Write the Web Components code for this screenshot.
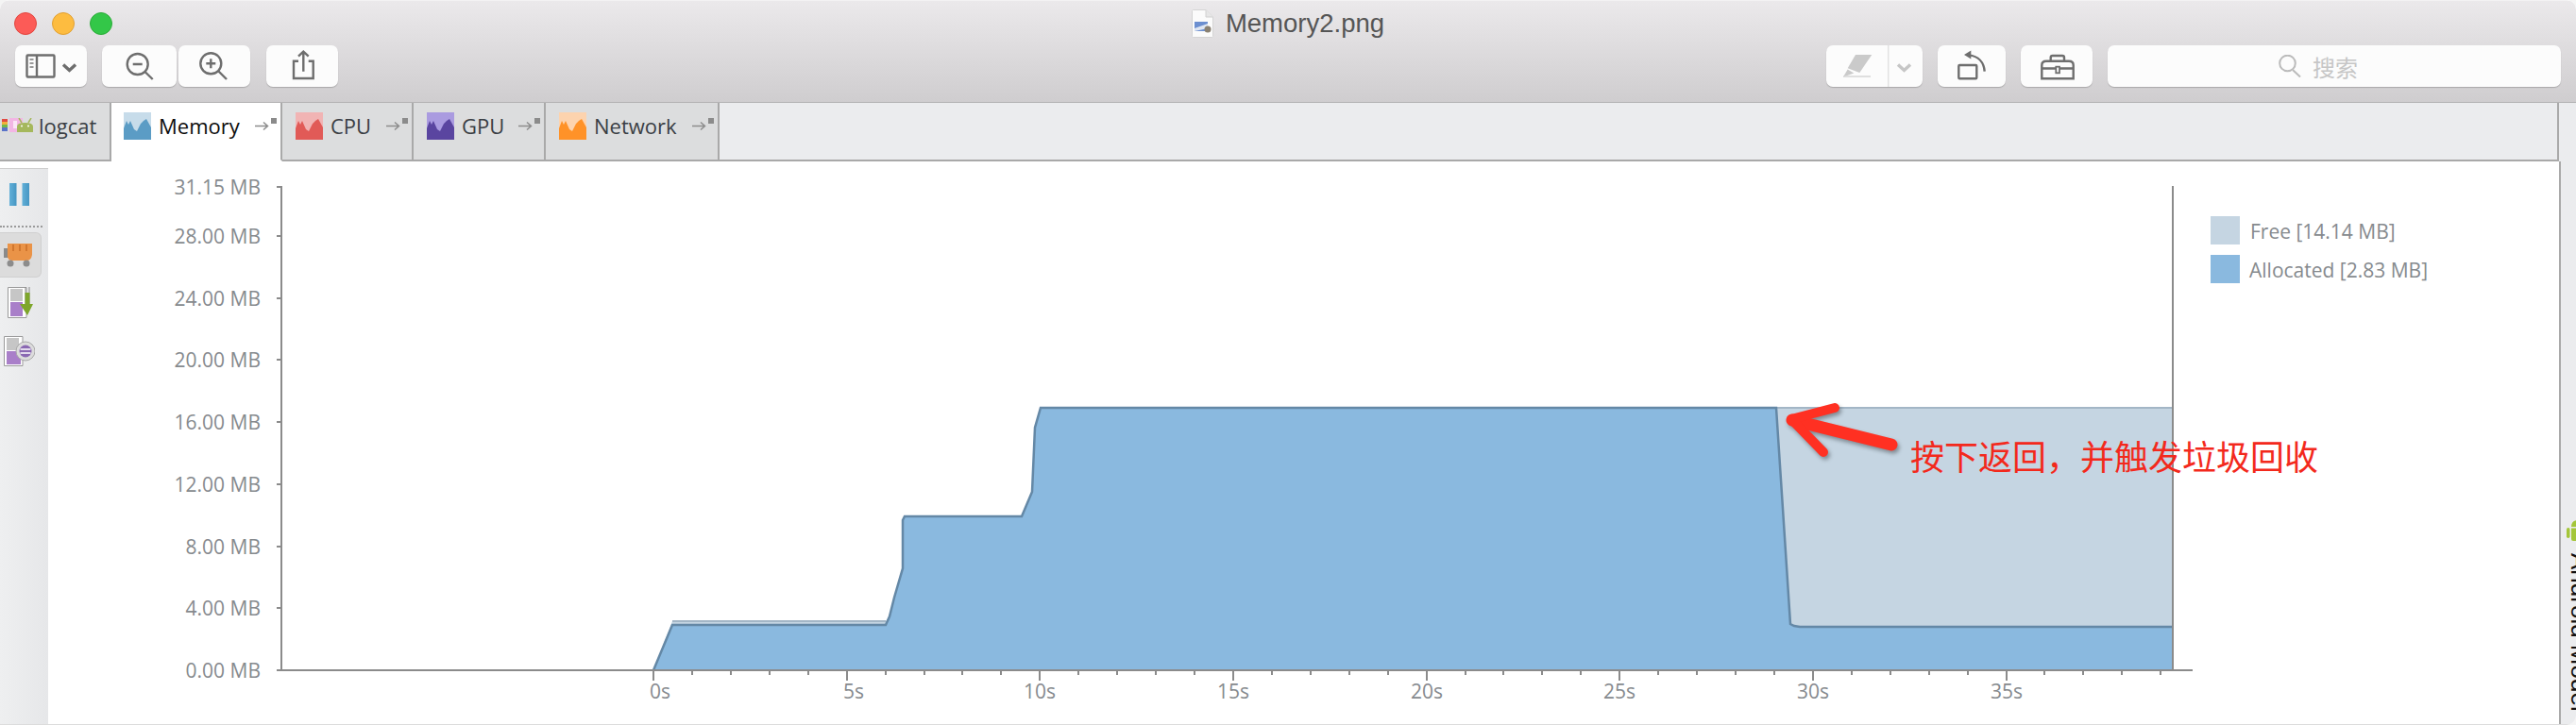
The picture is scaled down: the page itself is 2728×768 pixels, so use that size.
<!DOCTYPE html>
<html lang="zh">
<head>
<meta charset="utf-8">
<title>Memory2.png</title>
<style>
  html, body { margin: 0; padding: 0; background: #f4f4f4; }
</style>
</head>
<body>
<app-window></app-window>
<script>
const UI_FONT = `"Open Sans", "Liberation Sans", "Noto Sans CJK SC", sans-serif`;

class ToolButton extends HTMLElement {
  constructor() {
    super();
    this.attachShadow({ mode: "open" });
  }

  connectedCallback() {
    const w = this.getAttribute("w");
    this.shadowRoot.innerHTML = /* html */`
    <style>
      :host {
        display: block;
        flex: none;
        width: ${w}px;
        height: 44px;
        background: #fcfcfc;
        border-radius: 7px;
        box-shadow: 0 1px 1px rgba(0,0,0,.2);
      }
      svg { display: block; fill: none; stroke: #6e6e6e; stroke-width: 2.4; }
    </style>
    <svg width="${w}" height="44" viewBox="0 0 ${w} 44">${this.icon()}</svg>`;
  }

  icon() {
    return ToolButton.icons[this.getAttribute("icon")];
  }

  static get icons() {
    return {
      sidebar: `<rect x="12.5" y="10.5" width="29" height="23" rx="1"/><path d="M23 10.5V33.5"/>
        <path d="M15.5 15h4M15.5 19h4M15.5 23h4" stroke-width="2" stroke="#999"/>
        <path d="M51 20.500l6.500 6 6.500-6" stroke-width="3.400"/>`,
      zoomout: `<circle cx="37.700" cy="20" r="11"/><path d="M45.500 28L53.700 36"/><path d="M32.700 20h10"/>`,
      zoomin: `<circle cx="34.300" cy="19.300" r="11"/><path d="M42 27L51 36"/><path d="M29.300 19.300h10M34.300 14.300v10"/>`,
      share: `<path d="M34 16.700H29V35H49.700V16.700H44.700"/><path d="M39.300 27.700V7M34 11.700l5.300-5 5.400 5"/>`,
      markup: `<path d="M31 10H48.300L35.300 29L22.700 24.300Z" fill="#cacaca" stroke="none"/>
        <path d="M22.700 25.500L18 33.500L29.300 29.500Z" fill="#cacaca" stroke="none"/>
        <path d="M18 33H47" stroke="#d6d6d6" stroke-width="1.500"/>
        <path d="M65.700 0V44" stroke="#e2e2e2" stroke-width="1.500"/>
        <path d="M76 20.500l6.500 6 6.500-6" stroke="#c6c6c6" stroke-width="3.400"/>`,
      rotate: `<rect x="22.300" y="21" width="19" height="14.300" rx="1"/>
        <path d="M49.700 27.700C49 18 43 11.500 33 10.400"/>
        <path d="M28 10L35.300 5.500V14.500Z" fill="#6e6e6e" stroke="none"/>`,
      toolbox: `<path d="M22.300 35.300V21Q22.300 16.700 27 16.700H51Q55.700 16.700 55.700 21V35.300Z"/>
        <path d="M31.700 16.700V13Q31.700 11 33.700 11H44Q46 11 46 13V16.700"/>
        <path d="M22.300 24.500H37.300M41 24.500H55.700"/>
        <rect x="37.300" y="22.700" width="3.700" height="6.600" stroke-width="1.800"/>`
    };
  }
}

class TrafficLights extends HTMLElement {
  constructor() {
    super();
    this.attachShadow({ mode: "open" });
  }

  connectedCallback() {
    this.shadowRoot.innerHTML = /* html */`
    <style>
      :host { display: flex; gap: 16px; margin-left: 15px; }
      i { display: block; width: 24px; height: 24px; border-radius: 50%; box-sizing: border-box; border: 1px solid; }
      .r { background: #fc5b57; border-color: #e2463f; }
      .y { background: #fdbc40; border-color: #e1a033; }
      .g { background: #33c748; border-color: #2dac3a; }
    </style>
    <i class="r"></i><i class="y"></i><i class="g"></i>`;
  }
}

class MacToolbar extends HTMLElement {
  constructor() {
    super();
    this.attachShadow({ mode: "open" });
  }

  connectedCallback() {
    this.shadowRoot.innerHTML = /* html */`
    <style>
      :host {
        display: flex;
        flex-direction: column;
        height: 109px;
        box-sizing: border-box;
        background: linear-gradient(#ebe9eb, #cfcdcf);
        border-top: 1px solid #f3f2f3;
        border-bottom: 1px solid #b4b3b4;
      }
      .title {
        height: 47px;
        display: grid;
        grid-template-columns: 1fr auto 1fr;
        align-items: center;
      }
      .name {
        display: flex;
        align-items: center;
        gap: 13px;
        font: 27.5px "Liberation Sans", sans-serif;
        color: #555;
      }
      .row {
        display: flex;
        padding: 0 16px;
      }
      .spring { flex: 1; }
      .search {
        display: flex;
        align-items: center;
        flex: none;
        width: 480px;
        height: 44px;
        box-sizing: border-box;
        padding-left: 181px;
        gap: 11px;
        background: #fcfcfc;
        border-radius: 7px;
        box-shadow: 0 1px 1px rgba(0,0,0,.2);
        font: 24px "Noto Sans CJK SC", sans-serif;
        color: #c6c6c6;
      }
      tool-button { margin-right: 16px; }
      tool-button.tight { margin-right: 2px; }
      tool-button.wide { margin-right: 17px; }
    </style>
    <div class="title">
      <traffic-lights></traffic-lights>
      <div class="name">
        <svg width="23" height="30" viewBox="0 0 23 30">
          <path d="M.5 1.500Q.5.500 1.500.500H15L22.500 8V28.500Q22.500 29.500 21.500 29.500H1.500Q.5 29.500.5 28.500Z" fill="#fbfbfb" stroke="#d4d4d4"/>
          <path d="M15 .5V8H22.500" fill="#e6e6e6" stroke="#d0d0d0"/>
          <rect x="3" y="13" width="14" height="10" fill="#6c8fd0"/>
          <path d="M3 20L17 15V20L3 23Z" fill="#dfe6f2"/>
          <circle cx="17" cy="21" r="3.500" fill="#8a8172"/>
        </svg>
        <span>Memory2.png</span>
      </div>
      <span></span>
    </div>
    <div class="row">
      <tool-button w="76" icon="sidebar"></tool-button>
      <tool-button w="79" icon="zoomout" class="tight"></tool-button>
      <tool-button w="76" icon="zoomin" class="wide"></tool-button>
      <tool-button w="76" icon="share"></tool-button>
      <div class="spring"></div>
      <tool-button w="102" icon="markup"></tool-button>
      <tool-button w="72" icon="rotate"></tool-button>
      <tool-button w="76" icon="toolbox"></tool-button>
      <div class="search">
        <svg width="25" height="24" viewBox="0 0 25 24" fill="none" stroke="#bbb" stroke-width="2">
          <circle cx="9.500" cy="9" r="8.300"/><path d="M15 16L23 23.500"/>
        </svg>
        <span>搜索</span>
      </div>
    </div>`;
  }
}

class StudioTab extends HTMLElement {
  constructor() {
    super();
    this.attachShadow({ mode: "open" });
  }

  connectedCallback() {
    const light = this.getAttribute("light");
    const dark = this.getAttribute("dark");
    this.shadowRoot.innerHTML = /* html */`
    <style>
      :host {
        display: flex;
        flex: none;
        box-sizing: border-box;
        height: 62px;
        padding: 9px 0 0 14px;
        background: #dcddde;
        border-right: 2px solid #a9a9a9;
        border-bottom: 2px solid #a9a9a9;
        font: 22px ${UI_FONT};
        color: #3a3e44;
      }
      :host([active]) {
        padding-left: 13px;
        background: #fff;
        border-bottom-color: #fff;
        color: #0c0c0c;
      }
      .line { display: flex; align-items: center; height: 30px; width: 100%; }
      .text { margin-left: 8px; }
      :host([active]) .text { margin-left: 8px; }
      .arrow { margin-left: auto; margin-right: 4px; margin-top: -2px; }
    </style>
    <div class="line">
      <svg width="29" height="29" viewBox="0 0 29 29">
        <rect width="29" height="29" fill="${light}"/>
        <path d="M0 17L3 9L5 13L7 9L11 18L14 20L18 12L21 9L24 7L29 16V29H0Z" fill="${dark}"/>
      </svg>
      <span class="text"><slot></slot></span>
      <svg class="arrow" width="23" height="16" viewBox="0 0 23 16">
        <path d="M0 9.500H13M9 5.500l4.500 4-4.500 4" fill="none" stroke="#8d8d8d" stroke-width="1.500"/>
        <rect x="17" y="1" width="6" height="6" fill="#8b8b8b"/>
      </svg>
    </div>`;
  }
}

class LogcatTab extends HTMLElement {
  constructor() {
    super();
    this.attachShadow({ mode: "open" });
  }

  connectedCallback() {
    this.shadowRoot.innerHTML = /* html */`
    <style>
      :host {
        display: flex;
        flex: none;
        width: 118px;
        height: 62px;
        box-sizing: border-box;
        padding: 9px 0 0 2px;
        background: #dcddde;
        border-right: 2px solid #a9a9a9;
        border-bottom: 2px solid #a9a9a9;
        font: 22px ${UI_FONT};
        color: #3a3e44;
      }
      .line { display: flex; align-items: center; height: 30px; gap: 6px; }
    </style>
    <div class="line">
      <svg width="33" height="16" viewBox="0 0 33 16">
        <rect y="1" width="6" height="3" fill="#e14b42"/><rect y="4" width="6" height="3" fill="#f0b03c"/>
        <rect y="7" width="6" height="3" fill="#72b94a"/><rect y="10" width="6" height="4" fill="#5a73c9"/>
        <rect x="8" y="0" width="14" height="15" fill="#f2b6e4"/>
        <rect x="12" y="3" width="4" height="8" fill="#fbe6f6"/>
        <path d="M16 15V9Q16 5 24.500 5Q33 5 33 9V15Z" fill="#a5b85c"/>
        <path d="M18 0L21 5M31 0L28 5" stroke="#a5b85c" stroke-width="1.500"/>
        <circle cx="21" cy="8.500" r="1" fill="#fff"/><circle cx="28" cy="8.500" r="1" fill="#fff"/>
      </svg>
      <span><slot></slot></span>
    </div>`;
  }
}

class TabStrip extends HTMLElement {
  constructor() {
    super();
    this.attachShadow({ mode: "open" });
  }

  connectedCallback() {
    this.shadowRoot.innerHTML = /* html */`
    <style>
      :host {
        display: flex;
        flex: none;
        height: 62px;
        box-sizing: border-box;
        background: #ebecee;
      }
      .rest { flex: 1; border-bottom: 2px solid #a9a9a9; border-right: 2px solid #a9a9a9; }
      .end { flex: none; width: 18px; }
    </style>
    <slot></slot><div class="rest"></div><div class="end"></div>`;
  }
}

class SideRail extends HTMLElement {
  constructor() {
    super();
    this.attachShadow({ mode: "open" });
  }

  connectedCallback() {
    this.shadowRoot.innerHTML = /* html */`
    <style>
      :host {
        display: flex;
        flex-direction: column;
        flex: none;
        width: 51px;
        margin-top: 7px;
        box-sizing: border-box;
        background: linear-gradient(90deg, #eeeff0, #e6e7e9);
        border-top: 1px solid #cfcfcf;
      }
      svg { display: block; flex: none; }
      .pause { margin: 15px 0 0 10px; }
      .dots { margin: 21px 0 0 0; width: 45px; border-top: 2px dotted #9a9a9a; }
      .sel {
        margin-top: 5px;
        width: 44px;
        height: 48px;
        box-sizing: border-box;
        padding: 11px 0 0 4px;
        background: #dcdcdc;
        border: 1px solid #d0d0d0;
        border-left: 0;
        border-radius: 0 6px 6px 0;
      }
      .dump { margin: 10px 0 0 8px; }
      .gc { margin: 19px 0 0 4px; }
    </style>
    <svg class="pause" width="21" height="24" viewBox="0 0 21 24">
      <defs><linearGradient id="p" x1="0" x2="1" y1="0" y2="0"><stop offset="0" stop-color="#62b0d8"/><stop offset="1" stop-color="#4696c3"/></linearGradient></defs>
      <rect width="7.500" height="24" fill="url(#p)"/><rect x="13.500" width="7.500" height="24" fill="url(#p)"/>
    </svg>
    <div class="dots"></div>
    <div class="sel">
      <svg width="31" height="26" viewBox="0 0 31 26">
        <rect x="0" y="5" width="5" height="10" fill="#8a8a8a"/>
        <path d="M4 0H30L30 12Q29 18 24 18H9Q4 18 4 13Z" fill="#ea9347"/>
        <path d="M10 1V8M17 1V8M24 1V8" stroke="#c96f28" stroke-width="1.500"/>
        <circle cx="7" cy="21" r="3.500" fill="#8c8c8c"/><circle cx="24" cy="21" r="3.500" fill="#8c8c8c"/>
      </svg>
    </div>
    <svg class="dump" width="27" height="33" viewBox="0 0 27 33">
      <path d="M.5.500H20V32.500H.5Z" fill="#fff" stroke="#9a9a9a"/>
      <rect x="3" y="2" width="13" height="13" fill="#c6c6c6"/>
      <path d="M3 16H16V31H3Z" fill="#a97fc9"/>
      <path d="M19 0V18M23 0V18" stroke="#8a8a8a"/>
      <path d="M18.500 6H23.500V18H27L21 30L13 18H18.500Z" fill="#7ea62b"/>
    </svg>
    <svg class="gc" width="33" height="32" viewBox="0 0 33 32">
      <path d="M.5.500H20V31.500H.5Z" fill="#fff" stroke="#9a9a9a"/>
      <rect x="3" y="2" width="13" height="13" fill="#c6c6c6"/>
      <rect x="3" y="16" width="15" height="14" fill="#a97fc9"/>
      <circle cx="23" cy="16" r="10" fill="#dcdcdc" stroke="#a9a9a9"/>
      <circle cx="23" cy="16" r="6.500" fill="#8a68b2"/>
      <path d="M17.500 14H28.500M17.500 18H28.500" stroke="#fff" stroke-width="1.500"/>
    </svg>`;
  }
}

class MemoryChart extends HTMLElement {
  constructor() {
    super();
    this.attachShadow({ mode: "open" });
  }

  connectedCallback() {
    this.render();
  }

  // drawn in page coordinates, the group below shifts them into the element
  drawAxes() {
    let out = "";
    const zero = 710, perMb = 16.43;
    [["31.15 MB", 31.15], ["28.00 MB", 28], ["24.00 MB", 24], ["20.00 MB", 20], ["16.00 MB", 16],
     ["12.00 MB", 12], ["8.00 MB", 8], ["4.00 MB", 4], ["0.00 MB", 0]].forEach(([label, mb]) => {
      const y = Math.round(zero - mb * perMb);
      out += `<path class="axis" d="M293 ${y}H298"/>`;
      out += `<text class="lbl" x="276" y="${y + 8}" text-anchor="end">${label}</text>`;
    });
    const sec = 40.93;
    for (let s = 0; s < 40; s++) {
      const x = Math.round(692 + s * sec);
      const major = s % 5 === 0;
      out += `<path class="axis" d="M${x} 710V${major ? 721 : 715}"/>`;
      if (major) {
        // the first two labels sit a bit right of their tick in the reference
        const anchor = s < 10 ? `x="${x - 4}"` : `x="${x}" text-anchor="middle"`;
        out += `<text class="lbl" ${anchor} y="740">${s}s</text>`;
      }
    }
    return out;
  }

  render() {
    const alloc = "692,710 712,662 938,662 942,653 947,633 956,602 956,551 958,547 1082,547 1093,521 1096,453 1102,432 1881,432 1896,661 1900,663 1906,664 2300,664";
    this.shadowRoot.innerHTML = /* html */`
    <style>
      :host { display: block; flex: 1; min-width: 0; background: #fff; overflow: hidden; }
      svg { display: block; overflow: visible; }
      .axis { fill: none; stroke: #8b8b8b; stroke-width: 2; }
      .lbl { font: 21px ${UI_FONT}; fill: #868a8e; }
      .legend { font: 21px ${UI_FONT}; fill: #868a8e; }
      .note { font: 36px "Noto Sans CJK SC", sans-serif; fill: #f3291c; }
      .mark { filter: drop-shadow(2px 3px 2px rgba(0,0,0,.35)); }
    </style>
    <svg width="2659" height="597" viewBox="0 0 2659 597">
      <g transform="translate(-51 -171)">
        <polygon points="712,658 938,658 942,653 956,602 956,551 958,547 1082,547 1093,521 1096,453 1102,432 2300,432 2300,710 692,710" fill="#c5d5e2"/>
        <path d="M712 658H938M1881 432H2300" fill="none" stroke="#a3b6c6" stroke-width="2"/>
        <polygon points="${alloc} 2300,710" fill="#8ab9df"/>
        <polyline points="${alloc}" fill="none" stroke="#6488a6" stroke-width="2.500"/>
        <path class="axis" d="M298 197V710"/>
        <path class="axis" d="M293 710H2322"/>
        <path class="axis" d="M2301 197V710"/>
        ${this.drawAxes()}
        <rect x="2341" y="229" width="31" height="30" fill="#c5d5e2"/>
        <text class="legend" x="2383" y="253">Free [14.14 MB]</text>
        <rect x="2341" y="270" width="31" height="30" fill="#8ab9df"/>
        <text class="legend" x="2382" y="294">Allocated [2.83 MB]</text>
        <g class="mark" fill="none" stroke="#ff3022" stroke-linecap="round" stroke-linejoin="round">
          <path d="M1898 445L2003 471" stroke-width="13"/>
          <path d="M1943 432L1897 444L1931 479" stroke-width="10"/>
        </g>
        <text class="note" x="2023" y="498">按下返回&#xFF0C;并触发垃圾回收</text>
      </g>
    </svg>`;
  }
}

class ToolStrip extends HTMLElement {
  constructor() {
    super();
    this.attachShadow({ mode: "open" });
  }

  connectedCallback() {
    this.shadowRoot.innerHTML = /* html */`
    <style>
      :host {
        display: block;
        flex: none;
        width: 18px;
        box-sizing: border-box;
        background: #ebecee;
        border-left: 2px solid #a9a9a9;
        overflow: hidden;
        padding: 379px 0 0 6px;
      }
      svg { display: block; }
      .text {
        margin: 10px 0 0 2px;
        writing-mode: vertical-rl;
        white-space: nowrap;
        font: 26px/24px "Liberation Sans", sans-serif;
        color: #111;
      }
    </style>
    <svg width="22" height="26" viewBox="0 0 22 26">
      <rect x="0" y="9" width="3.500" height="11" rx="1.700" fill="#a4c639"/>
      <path d="M5 8Q5 1 13 1Q21 1 21 8Z" fill="#a4c639"/>
      <path d="M5 9.500H21V21Q21 23 19 23H7Q5 23 5 21Z" fill="#a4c639"/>
    </svg>
    <div class="text">Android Model</div>`;
  }
}

class AppWindow extends HTMLElement {
  constructor() {
    super();
    this.attachShadow({ mode: "open" });
  }

  connectedCallback() {
    this.shadowRoot.innerHTML = /* html */`
    <style>
      :host {
        display: flex;
        flex-direction: column;
        width: 2728px;
        height: 768px;
        overflow: hidden;
        background: #fff;
        border-radius: 10px 10px 10px 0;
        box-sizing: border-box;
      }
      .body {
        display: flex;
        flex: 1;
        min-height: 0;
        border-bottom: 1px solid #dcdcdc;
      }
    </style>
    <mac-toolbar></mac-toolbar>
    <tab-strip>
      <logcat-tab>logcat</logcat-tab>
      <studio-tab active style="width:181px" light="#c7dcea" dark="#5b9cc5">Memory</studio-tab>
      <studio-tab style="width:139px" light="#f1b4b4" dark="#e15a57">CPU</studio-tab>
      <studio-tab style="width:140px" light="#aa9be0" dark="#5a45a0">GPU</studio-tab>
      <studio-tab style="width:184px" light="#fdd3ae" dark="#ff9228">Network</studio-tab>
    </tab-strip>
    <div class="body">
      <side-rail></side-rail>
      <memory-chart></memory-chart>
      <tool-strip></tool-strip>
    </div>`;
  }
}

customElements.define("tool-button", ToolButton);
customElements.define("traffic-lights", TrafficLights);
customElements.define("mac-toolbar", MacToolbar);
customElements.define("studio-tab", StudioTab);
customElements.define("logcat-tab", LogcatTab);
customElements.define("tab-strip", TabStrip);
customElements.define("side-rail", SideRail);
customElements.define("memory-chart", MemoryChart);
customElements.define("tool-strip", ToolStrip);
customElements.define("app-window", AppWindow);
</script>
</body>
</html>
